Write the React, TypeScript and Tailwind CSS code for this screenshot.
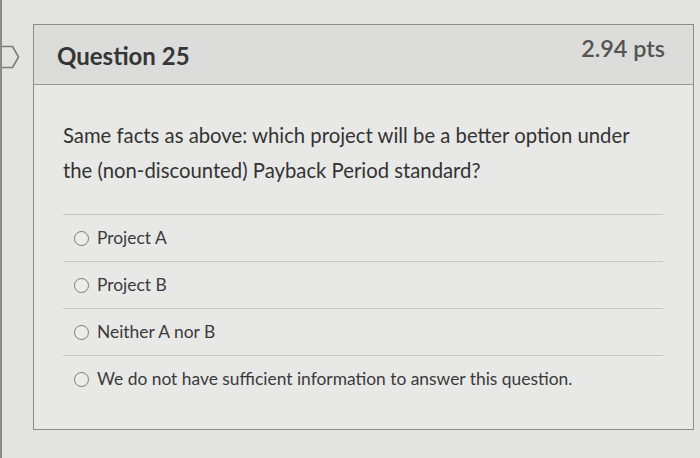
import React from "react";

const OPTIONS = [
  "Project A",
  "Project B",
  "Neither A nor B",
  "We do not have sufficient information to answer this question.",
];

function Radio() {
  return (
    <span className="mr-[8px] inline-block h-[15px] w-[15px] shrink-0 rounded-full border-[1.5px] border-[#7a7a7a] bg-[#ececea]" />
  );
}

export default function App() {
  return (
    <div
      className="relative h-[458px] w-[700px] overflow-hidden border-l-2 border-[#8a8a88] bg-[#e3e3e1] pt-[24px] pl-[31px]"
      style={{ fontFamily: "Lato, 'Open Sans', sans-serif" }}
    >
      {/* question flag marker */}
      <svg
        className="absolute left-0 top-[45px]"
        width="20"
        height="24"
        viewBox="0 0 20 24"
        fill="none"
      >
        <path
          d="M-2 1.5 H10.5 L16.5 12 L10.5 22.5 H-2"
          stroke="#7d7d7b"
          strokeWidth="1.6"
          strokeLinejoin="round"
        />
      </svg>

      <div className="w-[661px] border border-[#8c8c8a] bg-[#e8e8e6]">
        <div className="flex h-[60px] items-start justify-between border-b border-[#9a9a98] bg-[#dcdcda] pl-[23px] pr-[28px]">
          <h2 className="mt-[17px] text-[24px] font-bold leading-[28px] text-[#353535]">
            Question 25
          </h2>
          <span className="mt-[9px] text-[23.4px] font-semibold leading-[28px] text-[#545454]">
            2.94 pts
          </span>
        </div>

        <div className="pb-[26px] pl-[29px] pr-[30px] pt-[33px]">
          <p className="text-[20.3px] leading-[35px] text-[#333333]">
            Same facts as above: which project will be a better option under
            <br />
            the (non-discounted) Payback Period standard?
          </p>

          <div className="mt-[26px] border-t border-[#c6c6c4]">
            {OPTIONS.map((opt, i) => (
              <div
                key={opt}
                className={`flex h-[47px] items-center pl-[11px] text-[17.4px] text-[#3a3a3a] ${
                  i < OPTIONS.length - 1 ? "border-b border-[#c6c6c4]" : ""
                }`}
              >
                <Radio />
                <span>{opt}</span>
              </div>
            ))}
          </div>
        </div>
      </div>
    </div>
  );
}
